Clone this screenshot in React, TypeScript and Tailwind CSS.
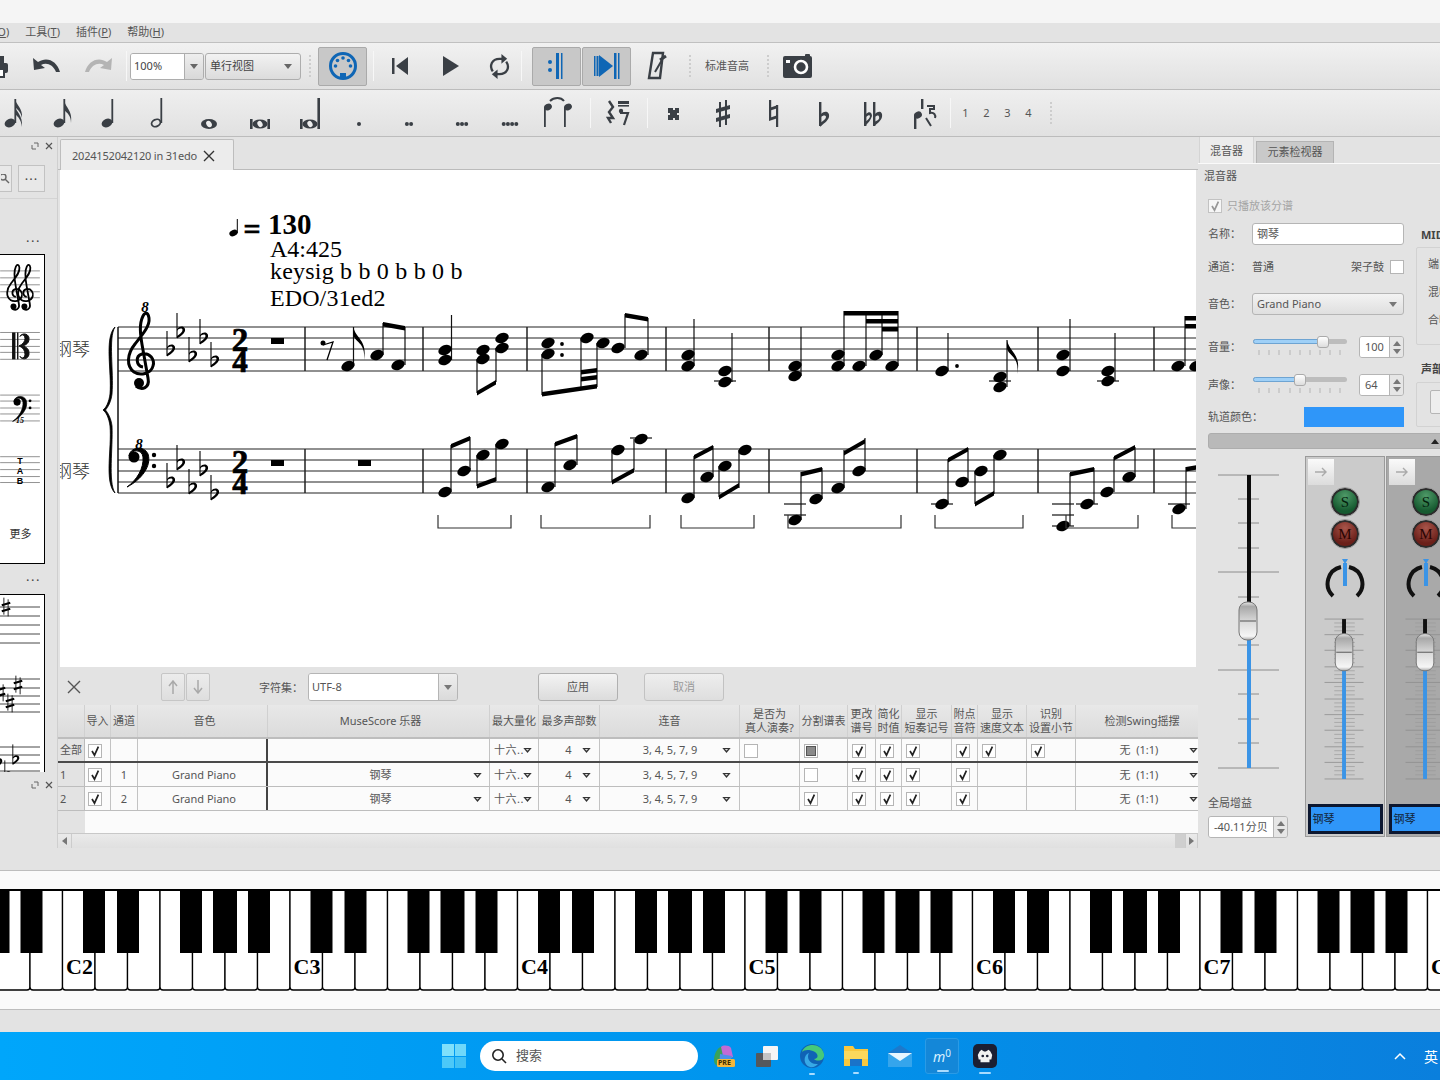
import React from "react";

const serif = "Liberation Serif, serif";
const cjkSerif = "Noto Sans CJK SC, sans-serif";

function Head({ x, y }: { x: number; y: number }) {
  return <ellipse cx={x} cy={y} rx={7} ry={4.8} transform={`rotate(-24 ${x} ${y})`} fill="#000" />;
}
function Stem({ x, y1, y2 }: { x: number; y1: number; y2: number }) {
  return <line x1={x} x2={x} y1={y1} y2={y2} stroke="#111" strokeWidth={1.2} />;
}
function Beam({ x1, y1, x2, y2, h = 4.5 }: { x1: number; y1: number; x2: number; y2: number; h?: number }) {
  return <polygon points={`${x1},${y1} ${x2},${y2} ${x2},${y2 + h} ${x1},${y1 + h}`} fill="#000" />;
}
function Ledger({ x, y }: { x: number; y: number }) {
  return <line x1={x - 11} x2={x + 11} y1={y} y2={y} stroke="#111" strokeWidth={1.2} />;
}
function Flat({ x, y, s = 1, c = "#000" }: { x: number; y: number; s?: number; c?: string }) {
  return (
    <g transform={`translate(${x} ${y}) scale(${s})`}>
      <line x1={-4} x2={-4} y1={-17} y2={8} stroke={c} strokeWidth={1.1} />
      <path d="M-4 -1C-1 -5 5 -4 4 1C3 4-1 7-4 8.5L-4 6C-1 4 1.6 2 1.5 0C1.4 -2 -2 -2 -4 1Z" fill={c} />
    </g>
  );
}
function Sharp({ x, y, s = 1 }: { x: number; y: number; s?: number }) {
  return (
    <g transform={`translate(${x} ${y}) scale(${s})`} stroke="#000">
      <line x1={-2.5} x2={-2.5} y1={-11} y2={9} strokeWidth={1} />
      <line x1={2.5} x2={2.5} y1={-9} y2={11} strokeWidth={1} />
      <line x1={-5} x2={5} y1={-2} y2={-5} strokeWidth={2.6} />
      <line x1={-5} x2={5} y1={5} y2={2} strokeWidth={2.6} />
    </g>
  );
}
function Treble({ tx = 0, ty = 0, s = 1 }: { tx?: number; ty?: number; s?: number }) {
  return (
    <g transform={`translate(${tx} ${ty}) scale(${s})`}>
      <path d="M143 367C136 366 135 356 142 354C150 352 155 360 153 366C151 374 140 376 134 372C126 366 127 354 135 344C143 334 150 326 149 318C148 312 145 312 143 316C139 324 140 334 143 350L148 378C150 388 142 391 136 386" fill="none" stroke="#000" strokeWidth={3} />
      <circle cx={139} cy={383} r={5} fill="#000" />
    </g>
  );
}
function Bass({ tx = 0, ty = 0, s = 1 }: { tx?: number; ty?: number; s?: number }) {
  return (
    <g transform={`translate(${tx} ${ty}) scale(${s})`}>
      <circle cx={134} cy={457} r={5.5} fill="#000" />
      <path d="M129 456C130 447 144 445 148 454C152 466 141 480 127 487C137 480 144 468 143 457C142 449 132 449 129 456Z" fill="#000" stroke="#000" strokeWidth={1} />
      <circle cx={154} cy={455} r={2.2} fill="#000" />
      <circle cx={154} cy={466} r={2.2} fill="#000" />
    </g>
  );
}

function Score() {
  const bars = [118, 305, 423, 527, 666, 769, 917, 1038, 1154];
  const flatX = [171, 181, 193, 204, 215];
  const f1 = [348, 330, 354, 336, 359];
  const f2 = [480, 462, 486, 468, 492];
  const brackets: [number, number][] = [[438, 511], [541, 650], [681, 754], [788, 901], [935, 1023], [1066, 1138], [1172, 1198]];
  const heads: [number, number][] = [
    [348, 366], [377, 355], [398, 365], [445, 350], [445, 360], [483, 350], [483, 359], [502, 338], [502, 348], [548, 343], [548, 354], [587, 338], [603, 343], [618, 348], [641, 355],
    [688, 355], [688, 366], [725, 371], [725, 382], [795, 366], [795, 376], [838, 355], [838, 366], [859, 366], [876, 355], [892, 366], [942, 371], [1000, 377], [1000, 387], [1063, 355], [1063, 371], [1108, 371], [1108, 381], [1178, 366], [1196, 366],
    [445, 492], [464, 471], [483, 455], [502, 444], [548, 487], [570, 465], [618, 450], [641, 439], [688, 498], [707, 477], [725, 466], [745, 450], [795, 520], [816, 499], [838, 488], [859, 471], [942, 504], [962, 482], [981, 471], [1000, 455], [1063, 526], [1087, 504], [1107, 492], [1129, 477], [1179, 509],
  ];
  const stems: [number, number, number][] = [
    [353.5, 366, 327], [383, 355, 323], [405, 365, 327], [451.5, 360, 315], [477, 359, 393], [496, 348, 382], [542, 354, 395], [581, 338, 390], [597, 343, 387], [625, 348, 314], [648, 355, 318],
    [694, 366, 319], [732, 382, 333], [801, 376, 327], [844, 366, 311], [866, 366, 311], [882, 355, 311], [898, 366, 311], [948, 371, 333], [1007, 387, 340], [1070, 371, 319], [1115, 381, 333], [1185, 366, 316],
    [451, 492, 445], [470, 471, 437], [477, 455, 486], [496, 444, 481], [555, 487, 443], [577, 465, 435], [612, 450, 482], [634, 439, 470], [694, 498, 456], [713, 477, 446], [719, 466, 497], [739, 450, 488], [801, 520, 472], [822, 499, 468], [844, 488, 450], [865, 471, 438], [948, 504, 459], [968, 482, 448], [975, 471, 504], [994, 455, 494], [1070, 526, 473], [1094, 504, 468], [1114, 492, 457], [1135, 477, 447], [1186, 509, 467],
  ];
  const beams: [number, number, number, number][] = [
    [383, 322, 405, 326], [477, 391, 496, 380], [542, 392, 597, 384], [581, 377, 597, 375], [581, 370, 597, 368], [625, 313, 648, 317],
    [844, 311, 898, 311], [866, 319, 898, 319], [882, 327, 898, 327], [1185, 316, 1196, 316], [1185, 324, 1196, 324],
    [451, 444, 470, 436], [477, 484, 496, 477], [555, 442, 577, 434], [612, 480, 634, 468], [694, 455, 713, 445], [719, 495, 739, 483], [801, 472, 822, 467], [844, 451, 865, 439], [948, 458, 968, 447], [975, 502, 994, 491], [1070, 472, 1094, 467], [1114, 456, 1135, 445], [1186, 467, 1198, 465],
  ];
  const ledgers: [number, number][] = [[725, 381], [1000, 381], [1108, 381], [641, 438], [795, 504], [795, 515], [942, 504], [1063, 504], [1063, 515], [1063, 526], [1087, 504], [1179, 504]];
  return (
    <svg viewBox="60 170 1136 497" className="block w-[1136px] h-[497px]">
      <text x={243.5} y={239} fontFamily={serif} fontWeight={700} fontSize={30} stroke="#000" strokeWidth={0.7}>=</text>
      <ellipse cx={233.5} cy={233} rx={4.3} ry={3} transform="rotate(-24 233.5 233)" fill="#000" />
      <line x1={237.3} x2={237.3} y1={233} y2={219} stroke="#000" strokeWidth={1} />
      <text x={268} y={234} fontFamily={serif} fontWeight={700} fontSize={29}>130</text>
      <text x={270} y={257} fontFamily={serif} fontSize={24}>A4:425</text>
      <text x={270} y={279} fontFamily={serif} fontSize={24} letterSpacing={0.2}>keysig b b 0 b b 0 b</text>
      <text x={270} y={306} fontFamily={serif} fontSize={24} letterSpacing={0.1}>EDO/31ed2</text>
      <text x={54} y={356} fontFamily={cjkSerif} fontSize={18} fontWeight={300} fill="#333">钢琴</text>
      <text x={54} y={478} fontFamily={cjkSerif} fontSize={18} fontWeight={300} fill="#333">钢琴</text>
      {[327, 338, 349, 360, 371, 449, 460, 471, 482, 493].map((y) => (
        <line key={y} x1={118} x2={1196} y1={y} y2={y} stroke="#222" strokeWidth={1.1} />
      ))}
      <line x1={118} x2={118} y1={327} y2={493} stroke="#111" strokeWidth={1.5} />
      {bars.slice(1).map((x) => (
        <g key={x}>
          <line x1={x} x2={x} y1={327} y2={371} stroke="#222" strokeWidth={1.5} />
          <line x1={x} x2={x} y1={449} y2={493} stroke="#222" strokeWidth={1.5} />
        </g>
      ))}
      <path d="M115 327C104 338 112 372 110 394C109 402 106 408 103 410C106 412 109 418 110 426C112 448 104 482 115 493C108 482 113 448 112 426C111 418 108 413 105.5 410C108 407 111 402 112 394C114 372 108 338 115 327Z" fill="#000" stroke="#000" strokeWidth={0.8} />
      <Treble />
      <Bass />
      <text x={145} y={312} fontFamily={serif} fontStyle="italic" fontWeight={700} fontSize={15} textAnchor="middle">8</text>
      <text x={139} y={449} fontFamily={serif} fontStyle="italic" fontWeight={700} fontSize={15} textAnchor="middle">8</text>
      {flatX.map((x, i) => (
        <g key={x}>
          <Flat x={x} y={f1[i]} />
          <Flat x={x} y={f2[i]} />
        </g>
      ))}
      {[0, 122].map((d) => (
        <g key={d}>
          <text x={240} y={351 + d} textAnchor="middle" fontFamily={serif} fontWeight={700} fontSize={33} stroke="#000" strokeWidth={0.7}>2</text>
          <text x={240} y={372 + d} textAnchor="middle" fontFamily={serif} fontWeight={700} fontSize={31} stroke="#000" strokeWidth={0.7}>4</text>
          <rect x={271} y={338 + d} width={13} height={6} fill="#000" />
        </g>
      ))}
      <rect x={358} y={460} width={13} height={6} fill="#000" />
      <circle cx={323} cy={343} r={2.5} fill="#000" />
      <path d="M323 345L333 342L327 360" fill="none" stroke="#000" strokeWidth={1.3} />
      {stems.map((s, i) => (
        <Stem key={i} x={s[0]} y1={s[1]} y2={s[2]} />
      ))}
      {beams.map((b, i) => (
        <Beam key={i} x1={b[0]} y1={b[1]} x2={b[2]} y2={b[3]} />
      ))}
      {ledgers.map((l, i) => (
        <Ledger key={i} x={l[0]} y={l[1]} />
      ))}
      {heads.map((h, i) => (
        <Head key={i} x={h[0]} y={h[1]} />
      ))}
      <circle cx={562} cy={344} r={1.9} fill="#000" />
      <circle cx={562} cy={355} r={1.9} fill="#000" />
      <circle cx={957} cy={366} r={1.9} fill="#000" />
      <path d="M353.5 327C355 338 368 340 364 360C366 342 354 342 353.5 335Z" fill="#000" />
      <path d="M1007 340C1009 352 1022 354 1017 374C1020 356 1008 356 1007 348Z" fill="#000" />
      {brackets.map(([a, b]) => (
        <path key={a} d={`M${a} 515V528H${b}V515`} fill="none" stroke="#333" strokeWidth={1.2} />
      ))}
    </svg>
  );
}

function Glyph({ children }: { children: React.ReactNode }) {
  return (
    <svg viewBox="0 0 40 46" className="w-10 h-[46px] shrink-0" fill="#3a3f45" stroke="none">
      {children}
    </svg>
  );
}
function IHead({ x = 18, y = 33 }: { x?: number; y?: number }) {
  return <ellipse cx={x} cy={y} rx={5.6} ry={4.2} transform={`rotate(-25 ${x} ${y})`} fill="#3a3f45" />;
}

function Cell({ w, children }: { w: string; children: React.ReactNode }) {
  return <div className={`${w} h-full flex items-center justify-center shrink-0 overflow-visible`}>{children}</div>;
}

function Sep({ cls = "" }: { cls?: string }) {
  return <div className={`w-px h-[30px] bg-[#f7f7f7] shrink-0 ${cls}`} />;
}
function Grip({ cls = "" }: { cls?: string }) {
  return <div className={`w-[3px] h-[22px] shrink-0 border-l-2 border-dotted border-[#cdcdcd] ${cls}`} />;
}

function Tri({ cls = "" }: { cls?: string }) {
  return (
    <svg viewBox="0 0 10 6" className={`w-[9px] h-[5px] shrink-0 ${cls}`}>
      <path d="M0 0H10L5 6Z" fill="#333" />
      <path d="M3 1.2H7L5 3.4Z" fill="#ddd" />
    </svg>
  );
}

function Check({ on = true, fill = false, off = false }: { on?: boolean; fill?: boolean; off?: boolean }) {
  return (
    <span className={`w-[14px] h-[14px] shrink-0 border border-[#b5b5b5] bg-white flex items-center justify-center ${off ? "opacity-70" : ""}`}>
      {fill ? (
        <span className="w-[10px] h-[10px] bg-[#8a8a8a] border border-[#555]" />
      ) : on ? (
        <svg viewBox="0 0 12 12" className="w-3 h-3">
          <path d="M3 6L5.5 10.2L9.4 1.6" fill="none" stroke={off ? "#777" : "#222"} strokeWidth={1.7} />
        </svg>
      ) : null}
    </span>
  );
}

function MenuItem({ label, k }: { label: string; k: string }) {
  return (
    <span>
      {label}(<span className="underline">{k}</span>)
    </span>
  );
}

function Toolbar1() {
  const ic = "#3a3f45";
  return (
    <div className="h-[47px] shrink-0 flex items-center bg-gradient-to-b from-[#f1f1f1] to-[#e1e1e1] border-b border-[#bcbcbc]">
      <svg viewBox="0 0 24 24" className="w-6 h-6 -ml-[14px] shrink-0">
        <rect x="6" y="2" width="12" height="8" fill={ic} />
        <rect x="2" y="9" width="20" height="10" rx="2" fill={ic} />
        <rect x="6" y="15" width="12" height="8" fill="#fff" stroke={ic} strokeWidth="2" />
      </svg>
      <svg viewBox="0 0 28 20" className="w-7 h-5 ml-[23px] shrink-0">
        <path d="M0 2L1 14L12 12L8 9C13 6 20 8 23 16L27 16C24 5 14 0 5 6Z" fill={ic} />
      </svg>
      <svg viewBox="0 0 28 20" className="w-7 h-5 ml-[23px] shrink-0">
        <path d="M28 2L27 14L16 12L20 9C15 6 8 8 5 16L1 16C4 5 14 0 23 6Z" fill="#b4b4b4" />
      </svg>
      <Sep cls="ml-[14px]" />
      <div className="ml-[3px] w-[74px] h-[27px] flex rounded-[3px] border border-[#adadad] overflow-hidden shrink-0">
        <div className="w-[53px] bg-white flex items-center pl-[3px] text-[11px] text-[#444]">100%</div>
        <div className="flex-1 border-l border-[#adadad] bg-gradient-to-b from-[#eee] to-[#d8d8d8] flex items-center justify-center">
          <svg viewBox="0 0 8 5" className="w-2 h-[5px]"><path d="M0 0H8L4 5Z" fill="#666" /></svg>
        </div>
      </div>
      <div className="ml-px w-[96px] h-[27px] flex items-center justify-between px-[4px] pr-[8px] rounded-[3px] border border-[#adadad] bg-gradient-to-b from-[#f2f2f2] to-[#dcdcdc] text-[11px] text-[#444] shrink-0">
        单行视图
        <svg viewBox="0 0 8 5" className="w-2 h-[5px]"><path d="M0 0H8L4 5Z" fill="#666" /></svg>
      </div>
      <Grip cls="ml-[8px]" />
      <div className="ml-[6px] w-[49px] h-[39px] rounded-[2px] bg-[#c8c8c8] border border-[#aaa] flex items-center justify-center shrink-0">
        <svg viewBox="0 0 30 30" className="w-[30px] h-[30px]">
          <circle cx="15" cy="15" r="12.5" fill="none" stroke="#0f66b5" strokeWidth="3" />
          <rect x="12" y="22" width="6" height="5" fill="#0f66b5" />
          {[[7.5, 15], [9.5, 9.5], [15, 7], [20.5, 9.5], [22.5, 15]].map(([x, y]) => (
            <circle key={x} cx={x} cy={y} r="1.8" fill="#0f66b5" />
          ))}
        </svg>
      </div>
      <Sep cls="ml-[6px]" />
      <svg viewBox="0 0 16 18" className="w-4 h-[18px] ml-[18px] shrink-0"><rect x="0" y="1" width="2.5" height="16" fill={ic} /><path d="M16 0V18L4 9Z" fill={ic} /></svg>
      <svg viewBox="0 0 16 20" className="w-4 h-5 ml-[35px] shrink-0"><path d="M0 0V20L16 10Z" fill={ic} /></svg>
      <svg viewBox="0 0 24 28" className="w-[23px] h-[27px] ml-[29px] shrink-0" fill="none" stroke={ic} strokeWidth="2.4">
        <path d="M5 19C1 13 4 6 12 6H15" />
        <path d="M19 9C23 15 20 22 12 22H9" />
        <path d="M14 1L20 6L14 11Z" fill={ic} stroke="none" />
        <path d="M10 17L4 22L10 27Z" fill={ic} stroke="none" />
      </svg>
      <Sep cls="ml-[10px]" />
      <div className="ml-[10px] w-[49px] h-[39px] rounded-[2px] bg-[#c8c8c8] border border-[#aaa] flex items-center justify-center shrink-0">
        <svg viewBox="0 0 20 28" className="w-5 h-7">
          <circle cx="3" cy="10" r="2" fill="#0f66b5" />
          <circle cx="3" cy="18" r="2" fill="#0f66b5" />
          <rect x="9" y="1" width="3" height="26" fill="#0f66b5" />
          <rect x="14" y="1" width="1.5" height="26" fill="#0f66b5" />
        </svg>
      </div>
      <div className="ml-px w-[49px] h-[39px] rounded-[2px] bg-[#c8c8c8] border border-[#aaa] flex items-center justify-center shrink-0">
        <svg viewBox="0 0 28 28" className="w-7 h-7">
          <rect x="1" y="4" width="1.5" height="20" fill="#0f66b5" />
          <rect x="3.5" y="4" width="2" height="20" fill="#0f66b5" />
          <path d="M6 3V25L20 14Z" fill="#0f66b5" />
          <rect x="21" y="1" width="2.5" height="26" fill="#0f66b5" />
          <rect x="25" y="1" width="1.5" height="26" fill="#0f66b5" />
        </svg>
      </div>
      <svg viewBox="0 0 20 30" className="w-5 h-[30px] ml-[16px] shrink-0" fill="none" stroke={ic} strokeWidth="2.4">
        <path d="M6 2H16L13 27H2Z" />
        <path d="M8 21L15 9" strokeWidth="2" />
        <path d="M13 9L19 5" strokeWidth="3" />
      </svg>
      <Grip cls="ml-[22px]" />
      <span className="ml-[13px] w-[44px] text-[11px] text-[#555] shrink-0 whitespace-nowrap">标准音高</span>
      <Grip cls="ml-[18px]" />
      <svg viewBox="0 0 29 24" className="w-[29px] h-6 ml-[13px] shrink-0">
        <rect x="0" y="2" width="29" height="22" rx="2" fill={ic} />
        <rect x="22" y="0" width="5" height="4" rx="1" fill={ic} />
        <rect x="3" y="6" width="4" height="3" fill="#fff" />
        <circle cx="18" cy="13" r="6" fill="none" stroke="#fff" strokeWidth="2.6" />
      </svg>
    </div>
  );
}

function Toolbar2() {
  const c = "#3a3f45";
  const dots = (n: number) => (
    <Glyph>
      {Array.from({ length: n }).map((_, i) => (
        <circle key={i} cx={20 - ((n - 1) * 4.2) / 2 + i * 4.2} cy={34} r={2} />
      ))}
    </Glyph>
  );
  return (
    <div className="h-[47px] shrink-0 flex items-center bg-gradient-to-b from-[#efefef] to-[#e1e1e1] border-b border-[#bcbcbc]">
      <div className="-ml-[13px] flex h-full items-center shrink-0">
        <Cell w="w-[50px]">
          <Glyph>
            <IHead x={18} y={33} />
            <rect x={22.4} y={9} width={1.8} height={24} />
            <path d="M23 9C24 15 31 18 30 28C29 22 26 20 23 17Z" />
            <path d="M23 16C24 22 31 25 30 37C29 29 26 27 23 24Z" />
          </Glyph>
        </Cell>
        <Cell w="w-[48px]">
          <Glyph>
            <IHead x={18} y={33} />
            <rect x={22.4} y={9} width={1.8} height={24} />
            <path d="M23 9C24 18 32 20 30 33C30 25 26 23 23 20Z" />
          </Glyph>
        </Cell>
        <Cell w="w-[48px]">
          <Glyph>
            <IHead x={18} y={33} />
            <rect x={22.4} y={9} width={1.8} height={24} />
          </Glyph>
        </Cell>
        <Cell w="w-[50px]">
          <Glyph>
            <ellipse cx={18} cy={33} rx={4.6} ry={3.4} transform="rotate(-25 18 33)" fill="none" stroke={c} strokeWidth={1.8} />
            <rect x={22.4} y={8} width={1.8} height={25} />
          </Glyph>
        </Cell>
        <Cell w="w-[52px]">
          <Glyph>
            <ellipse cx={20} cy={34} rx={8} ry={5} fill={c} />
            <ellipse cx={20} cy={34} rx={2.6} ry={3.4} transform="rotate(-30 20 34)" fill="#eee" />
          </Glyph>
        </Cell>
        <Cell w="w-[50px]">
          <Glyph>
            <rect x={10} y={29} width={2.6} height={10} />
            <rect x={27.4} y={29} width={2.6} height={10} />
            <ellipse cx={20} cy={34} rx={7.5} ry={4.6} fill={c} />
            <ellipse cx={20} cy={34} rx={2.4} ry={3.2} transform="rotate(-30 20 34)" fill="#eee" />
          </Glyph>
        </Cell>
        <Cell w="w-[50px]">
          <Glyph>
            <rect x={10} y={29} width={2.6} height={10} />
            <rect x={27.4} y={8} width={2.6} height={31} />
            <ellipse cx={20} cy={34} rx={7.5} ry={4.6} fill={c} />
            <ellipse cx={20} cy={34} rx={2.4} ry={3.2} transform="rotate(-30 20 34)" fill="#eee" />
          </Glyph>
        </Cell>
        <Cell w="w-[48px]">{dots(1)}</Cell>
        <Cell w="w-[52px]">{dots(2)}</Cell>
        <Cell w="w-[54px]">{dots(3)}</Cell>
        <Cell w="w-[42px]">{dots(4)}</Cell>
        <Cell w="w-[56px]">
          <Glyph>
            <ellipse cx={9} cy={17} rx={4} ry={3.2} transform="rotate(-25 9 17)" />
            <rect x={5} y={17} width={1.8} height={20} />
            <ellipse cx={29} cy={17} rx={4} ry={3.2} transform="rotate(-25 29 17)" />
            <rect x={25} y={17} width={1.8} height={20} />
            <path d="M11 11C15 7 22 7 25 11" fill="none" stroke={c} strokeWidth={2} />
          </Glyph>
        </Cell>
        <Sep cls="ml-[3px]" />
        <Cell w="w-[52px]">
          <Glyph>
            <path d="M12 11L16 17L12 22L16 28H11L14 33" fill="none" stroke={c} strokeWidth={2.4} />
            <rect x={21} y={11} width={11} height={3} />
            <rect x={21} y={15} width={11} height={1.6} />
            <circle cx={24} cy={21} r={2.2} />
            <path d="M23 23H31L27 35" fill="none" stroke={c} strokeWidth={2.2} />
          </Glyph>
        </Cell>
        <Sep cls="ml-[4px]" />
        <Cell w="w-[50px]">
          <Glyph>
            <path d="M15 18H20V20H22V18H26V23H24V25H26V30H22V28H20V30H15V25H17V23H15Z" />
          </Glyph>
        </Cell>
        <Cell w="w-[50px]">
          <Glyph>
            <rect x={16} y={12} width={2} height={25} />
            <rect x={22} y={10} width={2} height={25} />
            <path d="M13 19L27 15V19L13 23Z" />
            <path d="M13 28L27 24V28L13 32Z" />
          </Glyph>
        </Cell>
        <Cell w="w-[50px]">
          <Glyph>
            <rect x={16} y={10} width={2.2} height={20} />
            <rect x={23} y={15} width={2.2} height={22} />
            <path d="M16 18L25 15V18L16 21Z" />
            <path d="M16 28L25 25V28L16 31Z" />
          </Glyph>
        </Cell>
        <Cell w="w-[50px]">
          <Glyph>
            <rect x={16} y={12} width={2.4} height={24} />
            <path d="M18 24C22 20 27 22 26 27C25 31 20 34 17 37V33C20 31 23 29 23 27C23 25 20 25 18 27Z" />
          </Glyph>
        </Cell>
        <Cell w="w-[50px]">
          <Glyph>
            <rect x={11} y={12} width={2.4} height={24} />
            <path d="M13 24C16 21 19 22 19 26C18 30 15 33 12 36V32C15 30 17 28 17 26C17 25 15 25 13 27Z" />
            <rect x={20} y={12} width={2.4} height={24} />
            <path d="M22 24C26 20 30 22 29 27C28 31 24 34 21 36V32C24 31 27 29 26 27C26 25 24 25 22 27Z" />
          </Glyph>
        </Cell>
        <Cell w="w-[52px]">
          <Glyph>
            <ellipse cx={14} cy={25} rx={4} ry={3.4} transform="rotate(-25 14 25)" />
            <rect x={10} y={25} width={2.4} height={14} />
            <rect x={17} y={9} width={2.4} height={10} />
            <path d="M23 16H30V19H26V23C30 22 32 25 31 28M22 28L27 36" fill="none" stroke={c} strokeWidth={2} />
          </Glyph>
        </Cell>
        <Sep />
        <div className="ml-[4px] flex text-[11px] text-[#555] shrink-0">
          <span className="w-[21px] text-center">1</span>
          <span className="w-[21px] text-center">2</span>
          <span className="w-[21px] text-center">3</span>
          <span className="w-[21px] text-center">4</span>
        </div>
        <Grip cls="ml-[11px]" />
      </div>
    </div>
  );
}

function MiniIcons() {
  return (
    <div className="flex items-center justify-end gap-[6px] pr-[3px] text-[#666]">
      <svg viewBox="0 0 8 8" className="w-2 h-2" fill="none" stroke="#666" strokeWidth="1"><path d="M1 3V7H5M3 1H7V5" /></svg>
      <svg viewBox="0 0 8 8" className="w-2 h-2" fill="none" stroke="#555" strokeWidth="1.2"><path d="M1 1L7 7M7 1L1 7" /></svg>
    </div>
  );
}

function LeftPanel() {
  return (
    <div className="w-[58px] shrink-0 flex flex-col bg-[#e3e3e3] border-r border-[#cfcfcf] overflow-hidden">
      <div className="h-[18px] flex items-center justify-end pr-px">
        <MiniIcons />
      </div>
      <div className="mt-[10px] h-[27px] flex">
        <div className="w-[12px] border border-l-0 border-[#c2c2c2] bg-[#e8e8e8] flex items-center justify-end overflow-hidden">
          <svg viewBox="0 0 10 10" className="w-[10px] h-[10px] shrink-0" fill="none" stroke="#666" strokeWidth="1.4"><circle cx="2" cy="3" r="3" /><path d="M4 5L8 9" /></svg>
        </div>
        <div className="ml-[6px] w-[27px] border border-[#c2c2c2] bg-[#e8e8e8] flex items-center justify-center text-[13px] leading-none text-[#444] tracking-[1px] pb-[6px]">...</div>
      </div>
      <div className="h-[56px] flex items-end justify-end pr-[16px] pb-[10px] border-t border-[#d4d4d4] mt-[6px] text-[13px] leading-none tracking-[1.5px] text-[#444]">...</div>
      <div className="-ml-px w-[46px] h-[310px] shrink-0 bg-white border border-black relative">
        <svg viewBox="0 254 45 310" className="block w-[45px] h-[308px]">
          {[270, 277, 284, 291, 297, 332, 339, 346, 352, 359, 395, 401, 408, 414, 421, 457, 463, 470, 477, 483].map((y) => (
            <line key={y} x1={0} x2={40} y1={y} y2={y} stroke="#777" strokeWidth={0.8} />
          ))}
          <Treble tx={-70} ty={76} s={0.6} />
          <Treble tx={-59} ty={76} s={0.6} />
          <rect x={12} y={332} width={3.4} height={27} fill="#111" />
          <rect x={17} y={332} width={1.4} height={27} fill="#111" />
          <path d="M19 345.5C23 344 25 341 25 338C25 334 21 333 20 336C23 331 30 334 29 339C29 343 25 345.5 21 345.5C25 345.5 29 348 29 352C30 358 23 361 20 356C21 359 25 358 25 354C25 350 23 347 19 345.5Z" fill="#111" stroke="#111" />
          <Bass tx={-70} ty={105} s={0.65} />
          <text x={20} y={423} fontSize={8} fontFamily={serif} fontStyle="italic" fontWeight={700} textAnchor="middle">15</text>
          <text x={20} y={464} fontSize={9} fontFamily="Liberation Sans, sans-serif" fontWeight={700} textAnchor="middle">T</text>
          <text x={20} y={474} fontSize={9} fontFamily="Liberation Sans, sans-serif" fontWeight={700} textAnchor="middle">A</text>
          <text x={20} y={484} fontSize={9} fontFamily="Liberation Sans, sans-serif" fontWeight={700} textAnchor="middle">B</text>
        </svg>
        <span className="absolute left-0 right-[3px] bottom-[24px] text-center text-[11px] leading-none text-[#333]">更多</span>
      </div>
      <div className="h-[30px] flex items-start justify-end pr-[16px] pt-[6px] text-[13px] leading-none tracking-[1.5px] text-[#444]">...</div>
      <div className="-ml-px w-[46px] h-[178px] shrink-0 bg-white border border-b-0 border-black overflow-hidden">
        <svg viewBox="0 594 45 178" className="block w-[45px] h-[178px]">
          {[606, 615, 624, 633, 642, 678, 687, 695, 703, 711, 746, 754, 762, 770].map((y) => (
            <line key={y} x1={0} x2={40} y1={y} y2={y} stroke="#333" strokeWidth={0.9} />
          ))}
          <Sharp x={6} y={606} s={0.85} />
          <Sharp x={18} y={684} s={0.85} />
          <Sharp x={10} y={702} s={0.85} />
          <Sharp x={1} y={691} s={0.85} />
          <Flat x={16} y={757} s={0.8} />
          <Flat x={8} y={773} s={0.8} />
          <Flat x={-1} y={760} s={0.8} />
        </svg>
      </div>
      <div className="h-[26px] flex items-center justify-end pr-px">
        <MiniIcons />
      </div>
    </div>
  );
}

const gridCols = "grid grid-cols-[27px_26px_27px_130px_222px_49px_61px_140px_60px_48px_28px_26px_50px_26px_49px_49px_122px]";

function HCell({ children, cls = "" }: { children?: React.ReactNode; cls?: string }) {
  return (
    <div className={`h-full flex items-center justify-center text-center border-r border-[#d0d0d0] text-[11px] leading-[14px] text-[#555] whitespace-nowrap ${cls}`}>
      {children}
    </div>
  );
}

function C({ children, cls = "" }: { children?: React.ReactNode; cls?: string }) {
  return <div className={`h-full pt-px flex items-center border-r border-[#c3c3c3] text-[11px] text-[#555] whitespace-nowrap overflow-hidden ${cls}`}>{children}</div>;
}

function Row({ idx, first, name, inst, drum, cells }: { idx: string; first?: boolean; name?: string; inst?: string; drum?: React.ReactNode; cells: boolean[] }) {
  const b = first ? "border-b-2 border-[#4a4a4a]" : "border-b border-[#bdbdbd]";
  return (
    <div className={`${gridCols} h-6 ${b} bg-[#fbfbfb]`}>
      <div className="h-full pt-px flex items-center pl-[2px] bg-[#e3e3e3] border-r border-[#bbb] text-[11px] text-[#555] whitespace-nowrap overflow-hidden">{idx}</div>
      <C cls="pl-[3px]"><Check /></C>
      <C cls="justify-center">{first ? "" : idx}</C>
      <C cls="justify-center pl-[4px] border-r-2 border-r-[#444]">{name}</C>
      <C cls="justify-center pl-[4px] relative">
        {inst}
        {inst && <Tri cls="absolute right-[7px]" />}
      </C>
      <C cls="pl-[4px]"><span className="tracking-[0.5px]">十六..</span><Tri cls="-ml-[1px]" /></C>
      <C cls="justify-center gap-[10px] pl-[18px]">4<Tri /></C>
      <C cls="justify-center gap-[25px] pl-[35px]">3, 4, 5, 7, 9<Tri /></C>
      <C cls="pl-[4px]">{first && <Check on={false} />}</C>
      <C cls="pl-[4px]">{drum}</C>
      {cells.map((on, i) => (
        <C key={i} cls="pl-[4px]">{on && <Check />}</C>
      ))}
      <C cls="relative justify-center pl-[4px] border-r-0">
        无&nbsp;&nbsp;(1:1)
        <Tri cls="absolute right-0" />
      </C>
    </div>
  );
}

function Center() {
  return (
    <div className="w-[1140px] shrink-0 flex flex-col bg-[#e3e3e3]">
      <div className="h-[33px] pl-[2px] flex items-end border-b border-[#bbb] shrink-0">
        <div className="w-[174px] h-[31px] -mb-px bg-[#ececec] border border-b-0 border-[#bdbdbd] rounded-t-[2px] flex items-center pl-[11px] gap-[6px] pt-[2px] text-[11px] text-[#555]">
          <span className="tracking-[-0.2px] whitespace-nowrap">2024152042120 in 31edo</span>
          <svg viewBox="0 0 12 12" className="w-3 h-3 shrink-0" fill="none" stroke="#333" strokeWidth="1.4"><path d="M1 1L11 11M11 1L1 11" /></svg>
        </div>
      </div>
      <div className="ml-[2px] w-[1136px] h-[497px] bg-white shrink-0 overflow-hidden">
        <Score />
      </div>
      <div className="h-[6px] shrink-0" />
      <div className="h-[32px] shrink-0 flex items-start pl-[9px]">
        <svg viewBox="0 0 14 14" className="w-[14px] h-[14px] mt-[7px] shrink-0" fill="none" stroke="#555" strokeWidth="1.4"><path d="M1 1L13 13M13 1L1 13" /></svg>
        <div className="ml-[80px] flex gap-[1px]">
          <div className="w-6 h-[28px] border border-[#c6c6c6] rounded-[2px] bg-gradient-to-b from-[#ececec] to-[#dedede] flex items-center justify-center">
            <svg viewBox="0 0 10 14" className="w-[10px] h-[14px]" fill="none" stroke="#a9a9a9" strokeWidth="1.5"><path d="M5 14V2M1 6L5 1L9 6" /></svg>
          </div>
          <div className="w-6 h-[28px] border border-[#c6c6c6] rounded-[2px] bg-gradient-to-b from-[#ececec] to-[#dedede] flex items-center justify-center">
            <svg viewBox="0 0 10 14" className="w-[10px] h-[14px]" fill="none" stroke="#a9a9a9" strokeWidth="1.5"><path d="M5 0V12M1 8L5 13L9 8" /></svg>
          </div>
        </div>
        <span className="ml-[49px] mt-[7px] w-[49px] text-[11px] leading-[15px] text-[#555] shrink-0">字符集：</span>
        <div className="w-[150px] h-[28px] flex rounded-[3px] border border-[#b5b5b5] overflow-hidden shrink-0">
          <div className="flex-1 bg-white flex items-center pl-[3px] text-[11px] text-[#555]">UTF-8</div>
          <div className="w-[19px] border-l border-[#b5b5b5] bg-gradient-to-b from-[#eee] to-[#dadada] flex items-center justify-center">
            <svg viewBox="0 0 8 5" className="w-2 h-[5px]"><path d="M0 0H8L4 5Z" fill="#777" /></svg>
          </div>
        </div>
        <div className="ml-[80px] w-[80px] h-[28px] rounded-[3px] border border-[#b0b0b0] bg-gradient-to-b from-[#f3f3f3] to-[#dcdcdc] flex items-center justify-center text-[11px] text-[#555] shrink-0">应用</div>
        <div className="ml-[26px] w-[80px] h-[28px] rounded-[3px] border border-[#c2c2c2] bg-gradient-to-b from-[#eeeeee] to-[#dedede] flex items-center justify-center text-[11px] text-[#999] shrink-0">取消</div>
      </div>
      <div className="h-[128px] shrink-0 flex flex-col">
        <div className={`${gridCols} h-[34px] bg-gradient-to-b from-[#e8e8e8] to-[#dbdbdb] border-b-2 border-[#bdbdbd] shrink-0`}>
          <HCell />
          <HCell>导入</HCell>
          <HCell>通道</HCell>
          <HCell cls="pl-[4px]">音色</HCell>
          <HCell cls="pl-[4px]">MuseScore 乐器</HCell>
          <HCell>最大量化</HCell>
          <HCell>最多声部数</HCell>
          <HCell>连音</HCell>
          <HCell>是否为<br />真人演奏?</HCell>
          <HCell>分割谱表</HCell>
          <HCell>更改<br />谱号</HCell>
          <HCell>简化<br />时值</HCell>
          <HCell>显示<br />短奏记号</HCell>
          <HCell>附点<br />音符</HCell>
          <HCell>显示<br />速度文本</HCell>
          <HCell>识别<br />设置小节</HCell>
          <HCell cls="border-r-0 pl-[10px]">检测Swing摇摆</HCell>
        </div>
        <Row idx="全部" first drum={<Check fill />} cells={[true, true, true, true, true, true]} />
        <Row idx="1" name="Grand Piano" inst="钢琴" drum={<Check on={false} />} cells={[true, true, true, true, false, false]} />
        <Row idx="2" name="Grand Piano" inst="钢琴" drum={<Check />} cells={[true, true, true, true, false, false]} />
        <div className="flex-1 flex bg-[#fbfbfb]">
          <div className="w-[27px] bg-[#e3e3e3]" />
        </div>
      </div>
      <div className="h-[15px] shrink-0 flex items-center border-t border-[#c8c8c8] bg-gradient-to-b from-[#eaeaea] to-[#e0e0e0]">
        <div className="w-[14px] h-full flex items-center justify-center border-r border-[#ccc]">
          <svg viewBox="0 0 5 8" className="w-[5px] h-2"><path d="M5 0V8L0 4Z" fill="#777" /></svg>
        </div>
        <div className="flex-1" />
        <div className="w-[10px] h-full bg-[#cfcfcf]" />
        <div className="w-[13px] h-full flex items-center justify-center border-x border-[#ccc]">
          <svg viewBox="0 0 5 8" className="w-[5px] h-2"><path d="M0 0V8L5 4Z" fill="#777" /></svg>
        </div>
      </div>
    </div>
  );
}

function Spin({ value, w }: { value: string; w: string }) {
  return (
    <div className={`${w} h-[22px] shrink-0 flex rounded-[3px] border border-[#b5b5b5] overflow-hidden`}>
      <div className="flex-1 bg-white flex items-center pl-[5px] text-[11px] text-[#555] whitespace-nowrap">{value}</div>
      <div className="w-[14px] border-l border-[#b5b5b5] bg-[#e6e6e6] flex flex-col items-center justify-center gap-[3px]">
        <svg viewBox="0 0 8 5" className="w-2 h-[5px]"><path d="M0 5H8L4 0Z" fill="#777" /></svg>
        <svg viewBox="0 0 8 5" className="w-2 h-[5px]"><path d="M0 0H8L4 5Z" fill="#777" /></svg>
      </div>
    </div>
  );
}

function Slider({ thumb, fill }: { thumb: string; fill: string }) {
  return (
    <div className="relative w-[94px] h-[22px] shrink-0 ml-px">
      <div className="absolute top-[3px] left-0 right-0 h-[5px] rounded-full bg-[#bdbdbd]" />
      <div className={`absolute top-[3px] left-0 h-[5px] rounded-full bg-[#9fd0f7] border border-[#6ea4d2] ${fill}`} />
      <div className={`absolute top-0 w-[12px] h-[12px] rounded-[3px] bg-gradient-to-b from-[#fff] to-[#ddd] border border-[#aaa] ${thumb}`} />
      <svg viewBox="0 0 94 6" className="absolute left-0 bottom-[2px] w-[94px] h-[6px]">
        {[6, 16, 26, 37, 47, 57, 67, 77, 87].map((x) => (
          <line key={x} x1={x} x2={x} y1={0} y2={5} stroke="#aaa" strokeWidth={0.8} />
        ))}
      </svg>
    </div>
  );
}

function Thumb({ x, y }: { x: number; y: number }) {
  return (
    <g>
      <rect x={x} y={y} width={18} height={38} rx={8} fill="url(#thumbG)" stroke="#777" strokeWidth={1} />
      <line x1={x + 1} x2={x + 17} y1={y + 19} y2={y + 19} stroke="#555" strokeWidth={1} />
    </g>
  );
}

function Strip({ dark }: { dark?: boolean }) {
  const long = [0, 16, 32, 49, 65, 82, 98, 114, 131, 147, 164];
  const short: number[] = [];
  long.slice(0, -1).forEach((y, i) => {
    const d = long[i + 1] - y;
    short.push(y + d * 0.25, y + d * 0.5, y + d * 0.75);
  });
  return (
    <div className={`w-[80px] h-[381px] shrink-0 flex flex-col items-center border border-[#9a9a9a] ${dark ? "bg-[#a9a9a9]" : "bg-[#cbcbcb]"}`}>
      <div className="self-start ml-[2px] mt-[2px] w-[26px] h-[26px] bg-gradient-to-b from-[#fafafa] to-[#dcdcdc] flex items-center justify-center">
        <svg viewBox="0 0 12 12" className="w-3 h-3" fill="none" stroke="#aaa" strokeWidth="1.4"><path d="M0 6H11M7 2L11 6L7 10" /></svg>
      </div>
      <div className="mt-[3px] w-[28px] h-[28px] rounded-full border-2 border-[#2b2b2b] outline outline-1 outline-[#999] bg-[radial-gradient(circle_at_50%_25%,#4f9a68,#165a30_70%)] flex items-center justify-center text-[15px] leading-none text-[#041f0d] [font-family:'Liberation_Serif',serif]">S</div>
      <div className="mt-[4px] w-[28px] h-[28px] rounded-full border-2 border-[#2b2b2b] outline outline-1 outline-[#999] bg-[radial-gradient(circle_at_50%_25%,#a8554a,#6b201a_70%)] flex items-center justify-center text-[15px] leading-none text-[#2a0503] [font-family:'Liberation_Serif',serif]">M</div>
      <svg viewBox="1325 555 40 50" className="mt-[7px] w-10 h-[50px] shrink-0">
        <path d="M1333 596A17 17 0 0 1 1341 567" fill="none" stroke="#111" strokeWidth="4" />
        <path d="M1349 567A17 17 0 0 1 1357 596" fill="none" stroke="#111" strokeWidth="4" />
        <rect x="1343" y="563" width="4" height="23" fill="#3b94e6" />
        <path d="M1342 559H1348L1345 564Z" fill="#3b94e6" />
      </svg>
      <svg viewBox="0 0 80 170" className="mt-[10px] w-[78px] h-[170px] shrink-0">
        {long.map((y) => (
          <line key={y} x1={19} x2={59} y1={y + 2} y2={y + 2} stroke="#8c8c8c" strokeWidth={0.8} />
        ))}
        {short.map((y, i) => (
          <line key={i} x1={29} x2={50} y1={y + 2} y2={y + 2} stroke="#9a9a9a" strokeWidth={0.7} />
        ))}
        <rect x={37} y={2} width={4} height={20} fill="#111" />
        <rect x={37} y={50} width={4} height={116} fill="#3b94e6" />
        <Thumb x={30} y={17} />
      </svg>
      <div className="mt-auto mb-[2px] w-[75px] h-[30px] bg-[#2f96f9] border-[3px] border-[#0c1730] flex items-center pl-[2px] text-[11px] text-[#123] shrink-0">钢琴</div>
    </div>
  );
}

function RightPanel() {
  const lbl = "text-[11px] text-[#555] whitespace-nowrap";
  return (
    <div className="flex-1 min-w-0 flex flex-col bg-[#e3e3e3] overflow-hidden">
      <div className="h-[27px] shrink-0 flex items-end pl-[1px] border-b border-[#fafafa]">
        <div className="w-[55px] h-[26px] pt-[2px] bg-[#ececec] border-x border-[#d4d4d4] flex items-center justify-center text-[11px] text-[#555]">混音器</div>
        <div className="ml-[2px] w-[78px] h-[22px] bg-[#c9c9c9] border border-b-0 border-[#b4b4b4] flex items-center justify-center text-[11px] text-[#555]">元素检视器</div>
      </div>
      <div className="h-[24px] shrink-0 pl-[6px] flex items-center text-[11px] text-[#555]">混音器</div>
      <div className="flex shrink-0">
        <div className="ml-[10px] w-[196px] shrink-0 flex flex-col">
          <div className="mt-[11px] h-[14px] flex items-center gap-[5px] text-[11px] text-[#a5a5a5]"><Check off />只播放该分谱</div>
          <div className="mt-[10px] h-[22px] flex items-center">
            <span className={`w-[44px] ${lbl}`}>名称：</span>
            <div className="w-[152px] h-[22px] bg-white border border-[#b5b5b5] rounded-[3px] flex items-center pl-[4px] text-[11px] text-[#555]">钢琴</div>
          </div>
          <div className="mt-[14px] h-[16px] flex items-center">
            <span className={`w-[44px] ${lbl}`}>通道：</span>
            <span className={lbl}>普通</span>
            <span className={`ml-auto mr-[6px] ${lbl}`}>架子鼓</span>
            <Check on={false} />
          </div>
          <div className="mt-[18px] h-[22px] flex items-center">
            <span className={`w-[44px] ${lbl}`}>音色：</span>
            <div className="w-[152px] h-[22px] bg-gradient-to-b from-[#f3f3f3] to-[#dfdfdf] border border-[#b5b5b5] rounded-[3px] flex items-center justify-between pl-[4px] pr-[6px] text-[11px] text-[#555]">
              Grand Piano
              <svg viewBox="0 0 8 5" className="w-2 h-[5px]"><path d="M0 0H8L4 5Z" fill="#777" /></svg>
            </div>
          </div>
          <div className="mt-[21px] h-[22px] flex items-center">
            <span className={`w-[44px] ${lbl}`}>音量：</span>
            <Slider thumb="left-[64px]" fill="w-[70px]" />
            <span className="w-[12px]" />
            <Spin value="100" w="w-[45px]" />
          </div>
          <div className="mt-[16px] h-[22px] flex items-center">
            <span className={`w-[44px] ${lbl}`}>声像：</span>
            <Slider thumb="left-[41px]" fill="w-[47px]" />
            <span className="w-[12px]" />
            <Spin value="64" w="w-[45px]" />
          </div>
          <div className="mt-[11px] h-[20px] flex items-center">
            <span className={lbl}>轨道颜色：</span>
            <div className="ml-auto w-[100px] h-[20px] bg-[#2f96f9]" />
          </div>
        </div>
        <div className="ml-[12px] w-[60px] shrink-0 flex flex-col">
          <div className="mt-[37px] h-[20px] pl-[5px] text-[11px] font-bold text-[#444] flex items-center">MIDI</div>
          <div className="mt-[2px] h-[98px] border border-[#d2d2d2] rounded-[2px] flex flex-col gap-[12px] pt-[8px] pl-[11px] text-[11px] leading-[16px] text-[#555] overflow-hidden">
            <span className="whitespace-nowrap">端口</span>
            <span className="whitespace-nowrap">混响</span>
            <span className="whitespace-nowrap">合唱</span>
          </div>
          <div className="mt-[14px] h-[20px] pl-[5px] text-[11px] font-bold text-[#444] flex items-center">声部</div>
          <div className="mt-[3px] h-[45px] border border-[#d2d2d2] rounded-[2px] pl-[13px] pt-[7px]">
            <div className="w-[30px] h-[24px] border border-[#b5b5b5] rounded-[2px] bg-[#eee]" />
          </div>
        </div>
      </div>
      <div className="ml-[10px] mt-[6px] h-[16px] shrink-0 rounded-[3px] bg-[#b9b9b9] border border-[#adadad] -mr-[20px] flex items-center justify-end pr-[20px]">
        <svg viewBox="0 0 8 5" className="w-2 h-[5px]"><path d="M0 5H8L4 0Z" fill="#222" /></svg>
      </div>
      <div className="flex flex-1 min-h-0">
        <div className="w-[107px] shrink-0 flex flex-col pl-[10px]">
          <svg viewBox="1208 470 92 304" className="mt-[21px] w-[92px] h-[304px] shrink-0">
            {[475, 572, 670, 768].map((y) => (
              <line key={y} x1={1218} x2={1279} y1={y} y2={y} stroke="#777" strokeWidth={0.8} />
            ))}
            {[499, 523, 548, 597, 645, 694, 719, 743].map((y) => (
              <line key={y} x1={1238} x2={1259} y1={y} y2={y} stroke="#777" strokeWidth={0.8} />
            ))}
            <rect x={1247} y={475} width={4} height={130} fill="#0c0c0c" />
            <rect x={1247} y={640} width={4} height={128} fill="#3b94e6" />
            <defs>
              <linearGradient id="thumbG" x1="0" x2="0" y1="0" y2="1">
                <stop offset="0" stopColor="#e8e8e8" />
                <stop offset="0.12" stopColor="#a8a8a8" />
                <stop offset="0.5" stopColor="#d8d8d8" />
                <stop offset="0.9" stopColor="#f6f6f6" />
                <stop offset="1" stopColor="#aaa" />
              </linearGradient>
            </defs>
            <Thumb x={1239} y={602} />
          </svg>
          <div className="mt-[21px] text-[11px] leading-[16px] text-[#555]">全局增益</div>
          <div className="mt-[5px]"><Spin value="-40.11分贝" w="w-[80px]" /></div>
        </div>
        <div className="mt-[7px] flex gap-[1px]">
          <Strip />
          <Strip dark />
        </div>
      </div>
    </div>
  );
}

function Piano() {
  const blacks: [number, number][] = [];
  for (let k = -1; k < 7; k++) {
    const c = 62.7 + 227.5 * k;
    [[20.3, 22], [54.3, 22], [117.3, 22], [150.3, 24], [185.3, 22]].forEach(([o, w]) => blacks.push([c + o, w]));
  }
  return (
    <svg viewBox="0 871 1440 138" className="block w-[1440px] h-[138px]">
      {Array.from({ length: 46 }).map((_, i) => (
        <rect key={i} x={-2.5 + 32.5 * i} y={886} width={32.5} height={104} rx={3} fill="#fff" stroke="#000" strokeWidth={1.3} />
      ))}
      <rect x={0} y={889} width={1440} height={2} fill="#000" />
      <rect x={0} y={880} width={1440} height={9} fill="#fafafa" />
      {blacks.map(([x, w], i) => (
        <rect key={i} x={x} y={889} width={w} height={64} fill="#000" />
      ))}
      {["C2", "C3", "C4", "C5", "C6", "C7", "C8"].map((t, i) => (
        <text key={t} x={66 + 227.5 * i} y={974} fontFamily={serif} fontWeight={700} fontSize={22}>{t}</text>
      ))}
    </svg>
  );
}

function Dash({ cls = "" }: { cls?: string }) {
  return <span className={`absolute -bottom-[6px] h-[2px] rounded bg-[#a9dcff] ${cls}`} />;
}

function Taskbar() {
  return (
    <div className="h-[48px] shrink-0 flex items-center bg-gradient-to-r from-[#00a6fb] via-[#0095ee] to-[#0a7fdd]">
      <div className="ml-[442px] w-6 h-6 grid grid-cols-2 gap-[1px] shrink-0">
        <span className="bg-[#7fe0fb]" />
        <span className="bg-[#6fd8fa]" />
        <span className="bg-[#4cc8f8]" />
        <span className="bg-[#3fc0f5]" />
      </div>
      <div className="ml-[14px] w-[218px] h-[30px] rounded-full bg-white flex items-center pl-[11px] text-[13px] text-[#555] shrink-0">
        <svg viewBox="0 0 16 16" className="w-4 h-4 mr-[9px]" fill="none" stroke="#222" strokeWidth="1.6"><circle cx="7" cy="7" r="5.2" /><path d="M11 11L15 15" /></svg>
        搜索
      </div>
      <div className="ml-[13px] w-6 h-6 relative shrink-0">
        <svg viewBox="0 0 24 24" className="w-6 h-6">
          <path d="M3 16C3 8 8 2 13 2L9 22C5 22 3 20 3 16Z" fill="#3aa25a" />
          <path d="M10 3C12 1 18 1 20 4L22 13L13 16Z" fill="#c36ad6" />
          <path d="M9 10L21 12L17 22H8Z" fill="#4f90e8" />
          <rect x="6" y="15" width="18" height="8" rx="1.5" fill="#f4b73a" />
        </svg>
        <span className="absolute left-[7px] top-[15px] text-[7px] leading-[8px] font-bold text-[#3b2a00]">PRE</span>
      </div>
      <svg viewBox="0 0 24 24" className="ml-[20px] w-6 h-6 shrink-0">
        <rect x="1" y="9" width="15" height="14" rx="1" fill="#55585c" />
        <rect x="8" y="2" width="15" height="14" rx="1" fill="#f5f5f5" />
        <rect x="8" y="9" width="8" height="7" fill="#c4c4c4" />
      </svg>
      <div className="ml-[20px] w-[26px] h-[26px] relative shrink-0">
        <svg viewBox="0 0 26 26" className="w-[26px] h-[26px]">
          <circle cx="13" cy="13" r="12" fill="#0f63b5" />
          <path d="M3 9C6 0 22-1 25 11C26 18 18 19 15 16C19 16 20 12 16 9C10 6 5 7 3 9Z" fill="#46c97b" />
          <path d="M11 24C4 22 4 12 10 10C7 15 11 22 19 21C17 23 14 25 11 24Z" fill="#37a9e6" />
        </svg>
        <Dash cls="left-[10px] w-[6px]" />
      </div>
      <div className="ml-[18px] w-[26px] h-6 relative shrink-0">
        <svg viewBox="0 0 26 24" className="w-[26px] h-6">
          <path d="M1 2H10L12 5H25V22H1Z" fill="#f9c83e" />
          <rect x="7" y="14" width="12" height="8" fill="#1a73c9" />
          <rect x="1" y="7" width="24" height="8" fill="#fbd85c" />
        </svg>
        <Dash cls="left-[10px] w-[6px]" />
      </div>
      <svg viewBox="0 0 24 22" className="ml-[19px] w-6 h-[22px] shrink-0">
        <path d="M0 8L12 0L24 8V22H0Z" fill="#1c79cc" />
        <path d="M0 8H24V22H0Z" fill="#35a5ec" />
        <path d="M0 8H24L12 16Z" fill="#e8f6ff" />
      </svg>
      <div className="ml-[13px] w-[34px] h-[36px] rounded-[3px] border border-[#2a9be6] bg-[#1487d8] flex items-center justify-center text-[14px] text-[#d9f1ff] italic shrink-0 relative">
        m
        <span className="text-[10px] -mt-[6px] not-italic">0</span>
        <span className="absolute bottom-[1px] left-[11px] w-3 h-[2px] rounded bg-[#a9dcff]" />
      </div>
      <div className="ml-[14px] w-6 h-6 rounded-[5px] bg-[#1b1f33] flex items-center justify-center shrink-0 relative">
        <svg viewBox="0 0 20 20" className="w-[18px] h-[18px]">
          <path d="M4 5L6 3L9 5H11L14 3L16 5L18 9L17 14H15V17H5V14H3L2 9Z" fill="#f2f2f2" />
          <circle cx="7.5" cy="10" r="1.5" fill="#1b1f33" />
          <circle cx="12.5" cy="10" r="1.5" fill="#1b1f33" />
        </svg>
        <Dash cls="left-[6px] w-3" />
      </div>
      <svg viewBox="0 0 12 8" className="ml-[397px] w-3 h-2 shrink-0" fill="none" stroke="#fff" strokeWidth="1.5"><path d="M1 7L6 2L11 7" /></svg>
      <span className="ml-[18px] text-[14px] text-white whitespace-nowrap">英</span>
    </div>
  );
}

export default function App() {
  return (
    <div className="w-[1440px] h-[1080px] overflow-hidden flex flex-col bg-[#e3e3e3] [font-family:'Noto_Sans','Noto_Sans_CJK_SC',sans-serif]">
      <div className="h-[23px] shrink-0 bg-[#f5f5f5]" />
      <div className="h-[20px] shrink-0 bg-[#e3e3e3] border-b border-[#c0c0c0] flex items-center text-[11px] text-[#555] whitespace-nowrap">
        <span className="-ml-[6px]">(<span className="underline">O</span>)</span>
        <span className="ml-[16px]"><MenuItem label="工具" k="T" /></span>
        <span className="ml-[16px]"><MenuItem label="插件" k="P" /></span>
        <span className="ml-[16px]"><MenuItem label="帮助" k="H" /></span>
      </div>
      <Toolbar1 />
      <Toolbar2 />
      <div className="h-[711px] shrink-0 flex overflow-hidden">
        <LeftPanel />
        <Center />
        <RightPanel />
      </div>
      <div className="h-[22px] shrink-0 bg-[#e3e3e3]" />
      <div className="h-[140px] shrink-0 bg-[#fafafa] overflow-hidden border-y border-[#bdbdbd]">
        <Piano />
      </div>
      <div className="h-[22px] shrink-0 bg-[#e3e3e3]" />
      <Taskbar />
    </div>
  );
}
